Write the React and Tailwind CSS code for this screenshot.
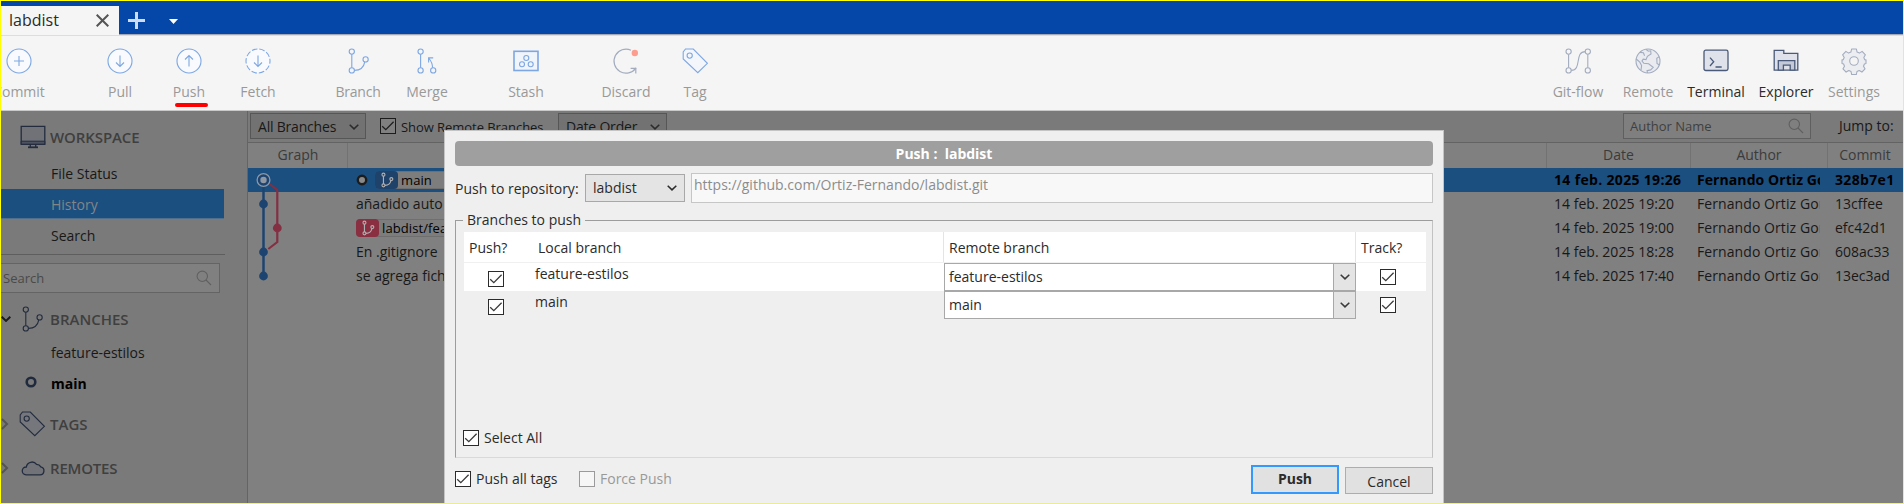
import clsx from 'clsx';

const BLUE = '#7da7e3';
const SLATE = '#a3acbf';
const NAVY = '#4a5a78';

/* ---------- icons ---------- */
function Svg({ c, w = 1.1, size = 28, children, className }) {
  return (
    <svg width={size} height={size} viewBox="0 0 28 28" fill="none" stroke={c} strokeWidth={w} className={clsx('shrink-0', className)}>
      {children}
    </svg>
  );
}
const CommitIcon = () => (
  <Svg c={BLUE}><circle cx="14" cy="14" r="12" fill="#f9fafd" /><path d="M9 14h10M14 9v10" /></Svg>
);
const PullIcon = () => (
  <Svg c={BLUE}><circle cx="14" cy="14" r="12" fill="#f9fafd" /><path d="M14 8.5v11M10 15.5l4 4 4-4" /></Svg>
);
const PushIcon = () => (
  <Svg c={BLUE}><circle cx="14" cy="14" r="12" fill="#f9fafd" /><path d="M14 19.5v-11M10 12.5l4-4 4 4" /></Svg>
);
const FetchIcon = () => (
  <Svg c={BLUE}><circle cx="14" cy="14" r="12" fill="#f9fafd" strokeDasharray="5.6 1.94" strokeDashoffset="2.8" /><path d="M14 8.5v11M10 15.5l4 4 4-4" /></Svg>
);
const BranchIcon = ({ c = BLUE, size = 28, w }) => (
  <Svg c={c} size={size} w={w}>
    <circle cx="7.8" cy="4.6" r="2.6" /><circle cx="7.8" cy="23.4" r="2.6" /><circle cx="21.6" cy="12.4" r="2.6" />
    <path d="M7.8 7.2v13.6M10.4 23.4c6 0 9.4-3 10.4-8.5" />
  </Svg>
);
const MergeIcon = () => (
  <Svg c={BLUE}>
    <circle cx="7.6" cy="4.6" r="2.6" /><circle cx="7.6" cy="23.4" r="2.6" /><circle cx="20.2" cy="23.4" r="2.6" />
    <path d="M7.6 7.2v13.6M19.6 20.8c-.1-4-1.2-6.5-3.6-9.3M15.6 15.5v-4.6h4.6" />
  </Svg>
);
const StashIcon = () => (
  <Svg c={BLUE}>
    <rect x="2" y="4.3" width="24" height="19.2" fill="#f0f4fb" strokeWidth="1.6" />
    <circle cx="14.3" cy="11" r="2.5" /><circle cx="10" cy="17.2" r="2.5" /><circle cx="18.7" cy="17.2" r="2.5" />
  </Svg>
);
const DiscardIcon = () => (
  <Svg c={SLATE} w={1.2}>
    <path d="M19 3.2A12 12 0 1 0 24 20.8" /><path d="M18.6 21.4h5.2v5" />
    <circle cx="22.8" cy="6" r="3.2" fill="#fd9d8d" stroke="none" />
  </Svg>
);
const TagIcon = ({ c = BLUE, fill = '#f3f6fb', size = 28 }) => (
  <Svg c={c} size={size}>
    <path d="M4.5 2h7.8L26.4 16.3 16.8 25.7 2.2 12V5z" fill={fill} /><circle cx="8.7" cy="8.6" r="2.6" />
  </Svg>
);
const GitFlowIcon = () => (
  <Svg c={SLATE}>
    <circle cx="4.6" cy="4.6" r="2.6" /><circle cx="4.6" cy="23.4" r="2.6" /><circle cx="23.8" cy="4.6" r="2.6" /><circle cx="23.8" cy="23.4" r="2.6" />
    <path d="M4.6 7.2v13.6M23.8 7.2v13.6M7.2 23.4c11 0 3-18.8 14-18.8" />
  </Svg>
);
const GlobeIcon = () => (
  <Svg c={SLATE}>
    <circle cx="14" cy="14" r="12" fill="#e9ebf0" />
    <path d="M12 2.300 14.300 4.200l2.400-.4.300 3.200-3.600 2.400-1.400 3.200-2.800-.4-1.200 1.800 1.800 2.200 4.800.6 4.600 3.500-2.600 2.600-3.600.8.600 2.200M2.200 12l3.600 3.200 1.800 3.400-.6 4.500M6 5.400l3.400.4 1.200 3M25.200 9.600l-2.400 1.600.2 5.200 2.400 1.600" />
  </Svg>
);
const TerminalIcon = () => (
  <Svg c={NAVY} w={1.3}>
    <rect x="2" y="3.2" width="24" height="20.3" rx="1.8" fill="#dfe2ea" /><path d="M8 10.6l3.7 4.2L8 19M13.5 20h6.2" />
  </Svg>
);
const ExplorerIcon = () => (
  <Svg c={NAVY} w={1.3}>
    <path d="M2.2 23.2V3.4h9.6v3h14v16.8z" fill="#dfe2ea" /><path d="M6.3 23.2v-9.6h16.5v9.6h-4.6v-5h-6.8v5z" fill="#c5cad9" />
  </Svg>
);
const GearIcon = () => (
  <Svg c={SLATE}>
    <path d="M11.6 2h4.8l.7 3.100 2.300 1 2.700-1.700 3.300 3.400-1.600 2.700.9 2.100 1.300.3v3.600l-1.600.5-.9 2.200 1.500 2.600-3.100 3.300-2.700-1.500-2.200.9-.7 3.100h-4.600l-.7-3.100-2.200-.9-2.700 1.500L3 21.800l1.500-2.600-.9-2.200-1.600-.5v-3.600l1.300-.3.900-2.100L2.600 7.800l3.300-3.400 2.700 1.700 2.300-1z" fill="#ebedf1" strokeLinejoin="round" />
    <circle cx="14" cy="14" r="4.3" fill="#f4f4f4" />
  </Svg>
);
const SearchIcon = () => (
  <svg width="16" height="16" viewBox="0 0 16 16" fill="none" stroke="#606060" strokeWidth="1.1" className="shrink-0">
    <circle cx="6.3" cy="6.3" r="5.2" /><path d="M10 10l5 5" />
  </svg>
);
const Chevron = ({ c = '#2b2b2b', w = 1.5 }) => (
  <svg width="10" height="6" viewBox="0 0 10 6" fill="none" stroke={c} strokeWidth={w} className="shrink-0"><path d="M.7.7 5 4.9 9.3.7" /></svg>
);
const ChevronRight = () => (
  <svg width="8" height="12" viewBox="0 0 8 12" fill="none" stroke="#555" strokeWidth="2" className="shrink-0"><path d="M1 1l5 5-5 5" /></svg>
);

/* ---------- pieces ---------- */
function Tool({ icon, label, dark, className }) {
  return (
    <div className={clsx('flex w-[70px] shrink-0 flex-col items-center', className)}>
      {icon}
      <span className={clsx('mt-[7px] leading-5', dark ? 'text-[#2b2b2b]' : 'text-[#999]')}>{label}</span>
    </div>
  );
}

function Check({ on = true, dim, off, className }) {
  return (
    <span className={clsx('flex size-4 shrink-0 items-center justify-center border', off ? 'border-[#9a9a9a] bg-[#f6f6f6]' : dim ? 'border-[#1c1c1c] bg-[#808080]' : 'border-[#2b2b2b] bg-white', className)}>
      {on && <svg width="14" height="14" viewBox="0 0 14 14" fill="none" stroke={dim ? '#1f1f1f' : '#3a3a3a'} strokeWidth="1.3"><path d="M1.2 7.2 4.8 10.7 12.6 2.8" /></svg>}
    </span>
  );
}

const commits = [
  { date: '14 feb. 2025 19:26', hash: '328b7e1' },
  { date: '14 feb. 2025 19:20', hash: '13cffee', text: 'añadido auto' },
  { date: '14 feb. 2025 19:00', hash: 'efc42d1', remote: 'labdist/fea' },
  { date: '14 feb. 2025 18:28', hash: '608ac33', text: 'En .gitignore' },
  { date: '14 feb. 2025 17:40', hash: '13ec3ad', text: 'se agrega fich' },
];

function Badge({ red, label, className }) {
  return (
    <span className={clsx('flex h-[18px] w-[100px] items-center rounded-sm border border-[#6f6f6f] bg-[#7d7d7d] text-[13px]', className)}>
      <span className={clsx('-ml-px flex h-[18px] w-[23px] items-center justify-center rounded-sm', red ? 'bg-[#8a2f42]' : 'bg-[#1f426b]')}>
        <BranchIcon c="#b0b0b0" size={16} w={2} />
      </span>
      <span className="ml-[3px] leading-4 tracking-[0.1px] text-black">{label}</span>
    </span>
  );
}

function Graph() {
  return (
    <svg width="99" height="120" viewBox="0 0 99 120" fill="none">
      <path d="M15.5 12v96" stroke="#1d4470" strokeWidth="2.5" />
      <path d="M19 14l10.300 8v52l-9 7" stroke="#842f42" strokeWidth="2.2" />
      <circle cx="15.5" cy="12" r="7.5" fill="#1a4f80" />
      <circle cx="15.5" cy="12" r="6.4" fill="#1d4470" stroke="#8b97a5" strokeWidth="1.3" />
      <circle cx="15.5" cy="12" r="3.2" fill="#8f98a3" />
      <circle cx="15.5" cy="36" r="4.4" fill="#1d4470" />
      <circle cx="29.3" cy="60" r="4.4" fill="#842f42" />
      <circle cx="15.5" cy="84" r="4.4" fill="#1d4470" />
      <circle cx="15.5" cy="108" r="4.4" fill="#1d4470" />
    </svg>
  );
}

function Sidebar() {
  const head = 'flex items-center text-[15px] font-semibold text-[#3f3f3f]';
  return (
    <aside className="flex w-[247px] shrink-0 flex-col border-r border-[#646464] bg-[#7a7a7a] text-[#181818]">
      <div className={clsx(head, 'mt-[10px] h-8 pl-[18px]')}>
        <Svg c="#232c3e" w={1.3}>
          <path d="M2.2 3.4h23.600v17.900H2.200z" fill="#707278" /><path d="M2.200 18.200h23.600v3H2.200z" fill="#4c5260" strokeWidth="1" /><path d="M11.300 21v3M16.700 21v3" /><path d="M9 24.300h10" strokeWidth="1.800" />
        </Svg>
        <span className="ml-[3px] tracking-[-0.1px]">WORKSPACE</span>
      </div>
      <div className="mt-[7px] flex h-[29px] items-center pb-[2px] pl-[50px]">File Status</div>
      <div className="mr-[23px] flex h-[30px] items-center border-b border-[#4f6f8c] bg-[#1a4f80] pt-[2px] pl-[50px] text-[#858585]">History</div>
      <div className="flex h-[35px] items-center pb-px pl-[50px]">Search</div>
      <div className="mr-[22px] h-px shrink-0 bg-[#5e5e5e]" />
      <div className="mt-[8px] mr-[27px] flex h-[30px] shrink-0 items-center justify-between border border-l-0 border-[#646464] bg-[#808080] pr-[7px] pl-[2px] text-[13px] text-[#4a4a4a]">
        Search
        <SearchIcon />
      </div>
      <div className={clsx(head, 'mt-[4px] h-[44px] shrink-0')}>
        <Chevron c="#1d1d1d" w={2} />
        <span className="ml-[7px] flex"><BranchIcon c="#232c3e" /></span>
        <span className="ml-[4px]">BRANCHES</span>
      </div>
      <div className="flex h-[24px] shrink-0 items-center pl-[50px]">feature-estilos</div>
      <div className="flex h-[38px] shrink-0 items-center pl-[24px] font-bold text-black">
        <svg width="12" height="12" viewBox="0 0 12 12" className="-mt-1"><circle cx="6" cy="6" r="4.3" fill="none" stroke="#1f2b3d" strokeWidth="2.6" /></svg>
        <span className="ml-[14px]">main</span>
      </div>
      <div className={clsx(head, 'h-[42px] shrink-0')}>
        <ChevronRight />
        <span className="ml-[9px] flex"><TagIcon c="#232c3e" fill="#75777c" /></span>
        <span className="ml-[4px]">TAGS</span>
      </div>
      <div className={clsx(head, 'mt-[2px] h-[42px] shrink-0')}>
        <ChevronRight />
        <span className="ml-[10px] flex">
          <Svg c="#232c3e" w={1.3}><path d="M7 20.8h13.800a4 4 0 0 0 1-7.900 5 5 0 0 0-4.200-2.600A5.800 5.800 0 0 0 7.300 13a3.900 3.900 0 0 0-.3 7.800z" fill="#717378" /></Svg>
        </span>
        <span className="ml-[3px] tracking-[-0.2px]">REMOTES</span>
      </div>
    </aside>
  );
}

function History() {
  return (
    <section className="flex min-w-0 grow flex-col bg-[#808080] text-[#181818]">
      <div className="flex h-[32px] shrink-0 items-start border-b border-[#636363] bg-[#7a7a7a] pt-[2px] text-[13px]">
        <div className="ml-[2px] flex h-[26px] w-[116px] items-center justify-between border border-[#565656] bg-[#727272] pt-0.5 pr-[6px] pl-[7px] text-[14px] tracking-[-0.2px]">All Branches<Chevron /></div>
        <Check dim className="mt-[5px] ml-[14px]" />
        <span className="mt-[4px] ml-[5px] w-[157px] leading-5 tracking-[-0.05px]">Show Remote Branches</span>
        <div className="flex h-[26px] w-[109px] items-center justify-between border border-[#565656] bg-[#727272] pt-0.5 pr-[6px] pl-[7px] text-[14px] tracking-[-0.2px]">Date Order<Chevron /></div>
        <div className="ml-auto flex h-[26px] w-[188px] items-center justify-between border border-[#5f5f5f] bg-[#7f7f7f] pr-[6px] pl-[6px] text-[#3f3f3f]">Author Name<SearchIcon /></div>
        <span className="mt-[3px] mr-[5px] ml-[28px] w-[59px] text-[14px] leading-5 whitespace-nowrap">Jump to:</span>
      </div>
      <div className="flex h-[25px] shrink-0 text-center leading-[24px] text-[#3b3b3b]">
        <div className="w-[100px] border-r border-[#727272] pl-px">Graph</div>
        <div className="grow border-r border-[#727272]" />
        <div className="w-[144px] border-r border-[#727272]">Date</div>
        <div className="w-[137px] border-r border-[#727272]">Author</div>
        <div className="w-[75px] pr-px">Commit</div>
      </div>
      <div className="grid grid-cols-1 grid-rows-1">
        <div className="col-start-1 row-start-1">
          {commits.map((c, i) => (
            <div key={c.hash} className={clsx('flex h-6 items-center whitespace-nowrap', i === 0 && 'bg-[#1a4f80] font-bold text-black')}>
              <div className="w-[108px] shrink-0" />
              <div className="flex min-w-0 grow items-center font-normal">
                {i === 0 && (
                  <>
                    <svg width="12" height="12" viewBox="0 0 12 12"><circle cx="6" cy="6" r="4.2" fill="#8a8a8a" stroke="#1c1c1c" strokeWidth="2.4" /></svg>
                    <Badge label="main" className="ml-[7px]" />
                  </>
                )}
                {c.text}
                {c.remote && <Badge red label={c.remote} />}
              </div>
              <div className={clsx('w-[143px] shrink-0', i === 0 ? 'tracking-[0.33px]' : 'tracking-[0.03px]')}>{c.date}</div>
              <div className="w-[123px] shrink-0 overflow-hidden tracking-[0.08px]">Fernando Ortiz Gon</div>
              <div className={clsx('ml-[15px] w-[68px] shrink-0', i === 0 && 'tracking-[0.33px]')}>{c.hash}</div>
            </div>
          ))}
        </div>
        <div className="col-start-1 row-start-1"><Graph /></div>
      </div>
    </section>
  );
}

function PushRow({ name, white }) {
  return (
    <div className={clsx('flex h-7 text-[#2b2b2b]', white && 'bg-white')}>
      <Check className="mt-[8px] ml-[24px]" />
      <span className="ml-[31px] w-[409px] leading-[22px]">{name}</span>
      <div className="flex w-[412px] border border-[#a8a8a8] bg-white">
        <span className="grow pl-1 leading-[26px]">{name}</span>
        <span className="flex w-[22px] items-center justify-center border-l border-[#a8a8a8] bg-[#e4e4e4]"><Chevron c="#3a3a3a" /></span>
      </div>
      <Check className="mt-[6px] ml-[24px]" />
    </div>
  );
}

function PushDialog() {
  return (
    <div className="absolute top-[129px] left-[443px] flex h-[373px] w-[1000px] flex-col border border-b-0 border-[#c4c4c4] bg-[#efefef] px-[10px] pt-[10px] text-[#2b2b2b]">
      <div className="h-[25px] shrink-0 rounded bg-[#9f9f9f] text-center font-bold leading-[25px] whitespace-pre text-white">Push :  labdist</div>
      <div className="mt-[7px] flex h-[30px] shrink-0">
        <span className="w-[130px] leading-[31px]">Push to repository:</span>
        <div className="mt-px flex h-7 w-[100px] items-center justify-between border border-[#a8a8a8] bg-[#e4e4e4] pr-[7px] pl-[7px]">labdist<Chevron /></div>
        <div className="ml-[6px] grow border border-[#c6c6c6] bg-[#f8f8f8] pl-[2px] leading-[22px] text-[#8c8c8c]">https://github.com/Ortiz-Fernando/labdist.git</div>
      </div>
      <fieldset className="mt-[7px] flex h-[248px] min-w-0 shrink-0 flex-col border border-t-[#9c9c9c] border-r-[#c2c2c2] border-b-[#d9d9d9] border-l-[#9c9c9c] pr-[6px] pl-[8px]">
        <legend className="-ml-px h-[20px] px-1 leading-[20px]">Branches to push</legend>
        <div className="mt-[2px] flex h-[31px] w-[962px] border-b border-[#f0f0f0] bg-white leading-[31px]">
          <span className="ml-[5px] w-[69px]">Push?</span>
          <span className="w-[406px] border-r border-[#e4e4e4]">Local branch</span>
          <span className="w-[412px] border-r border-[#e4e4e4] pl-[5px]">Remote branch</span>
          <span className="pl-[5px]">Track?</span>
        </div>
        <div className="w-[962px]">
          <PushRow name="feature-estilos" white />
          <PushRow name="main" />
        </div>
        <div className="mt-[111px] -ml-px flex items-center leading-4"><Check /><span className="ml-[5px]">Select All</span></div>
      </fieldset>
      <div className="flex h-[45px] shrink-0 items-start">
        <Check className="mt-[13px]" />
        <span className="mt-[11px] ml-[5px] w-[103px] leading-5">Push all tags</span>
        <Check off on={false} className="mt-[13px]" />
        <span className="mt-[11px] ml-[5px] leading-5 text-[#999]">Force Push</span>
        <button className="mt-[7px] ml-auto h-[29px] w-[88px] border-2 border-[#3399ff] bg-[#e1e1e1] pb-px font-bold">Push</button>
        <button className="mt-[9px] ml-[6px] h-[27px] w-[88px] border border-[#adadad] bg-[#e1e1e1] pt-[2px]">Cancel</button>
      </div>
    </div>
  );
}

export default function App() {
  return (
    <div className="relative flex h-[504px] w-[1904px] flex-col overflow-hidden border border-[#ffff00] bg-[#f5f5f5] font-['Open_Sans','Noto_Sans',sans-serif] text-[14px] leading-5">
      <header className="flex h-[34px] shrink-0 flex-col border-b border-[#a5a9b5] bg-[#0547a9]">
        <div className="mt-[2px] h-px shrink-0 bg-[repeating-linear-gradient(90deg,#2c3f63_0_1px,transparent_1px_3px)]" />
        <div className="mt-[2px] flex grow">
          <div className="-mb-px flex w-[118px] items-center justify-between bg-[#f5f5f5] pr-[10px] pl-[8px]">
            <span className="-mt-px text-[16px] text-[#2b2b2b]">labdist</span>
            <svg width="13" height="13" viewBox="0 0 13 13" stroke="#555" strokeWidth="2"><path d="M.7.7l11.600 11.600M12.300.7.7 12.300" /></svg>
          </div>
          <svg width="17" height="17" viewBox="0 0 17 17" stroke="#cfdcf0" strokeWidth="3" className="mt-[6px] ml-[9px]"><path d="M0 8.500h17M8.500 0v17" /></svg>
          <svg width="9" height="5" viewBox="0 0 9 5" className="mt-[13px] ml-[24px]"><path d="M0 0h9L4.500 5z" fill="#fff" /></svg>
        </div>
      </header>
      <div className="flex h-[76px] shrink-0 border-t border-b border-t-[#dcdce6] border-b-[#c9c9c9] bg-[#f5f5f5] pt-[11px]">
        <Tool icon={<CommitIcon />} label="Commit" className="-ml-[17px]" />
        <Tool icon={<PullIcon />} label="Pull" className="ml-[31px]" />
        <div className="-ml-px flex flex-col items-center">
          <Tool icon={<PushIcon />} label="Push" />
          <div className="mt-px ml-[4px] h-[4px] w-[33px] rounded-full bg-[#ff0000]" />
        </div>
        <Tool icon={<FetchIcon />} label="Fetch" className="-ml-px" />
        <Tool icon={<BranchIcon />} label="Branch" className="ml-[30px] tracking-[-0.2px]" />
        <Tool icon={<MergeIcon />} label="Merge" className="-ml-px" />
        <Tool icon={<StashIcon />} label="Stash" className="ml-[29px]" />
        <Tool icon={<DiscardIcon />} label="Discard" className="ml-[30px]" />
        <Tool icon={<TagIcon />} label="Tag" className="-ml-px" />
        <Tool icon={<GitFlowIcon />} label="Git-flow" className="ml-auto" />
        <Tool icon={<GlobeIcon />} label="Remote" />
        <Tool icon={<TerminalIcon />} label="Terminal" dark className="-ml-[2px]" />
        <Tool icon={<ExplorerIcon />} label="Explorer" dark />
        <Tool icon={<GearIcon />} label="Settings" className="mr-[14px] -ml-[2px]" />
      </div>
      <main className="flex min-h-0 grow">
        <Sidebar />
        <History />
      </main>
      <PushDialog />
    </div>
  );
}
